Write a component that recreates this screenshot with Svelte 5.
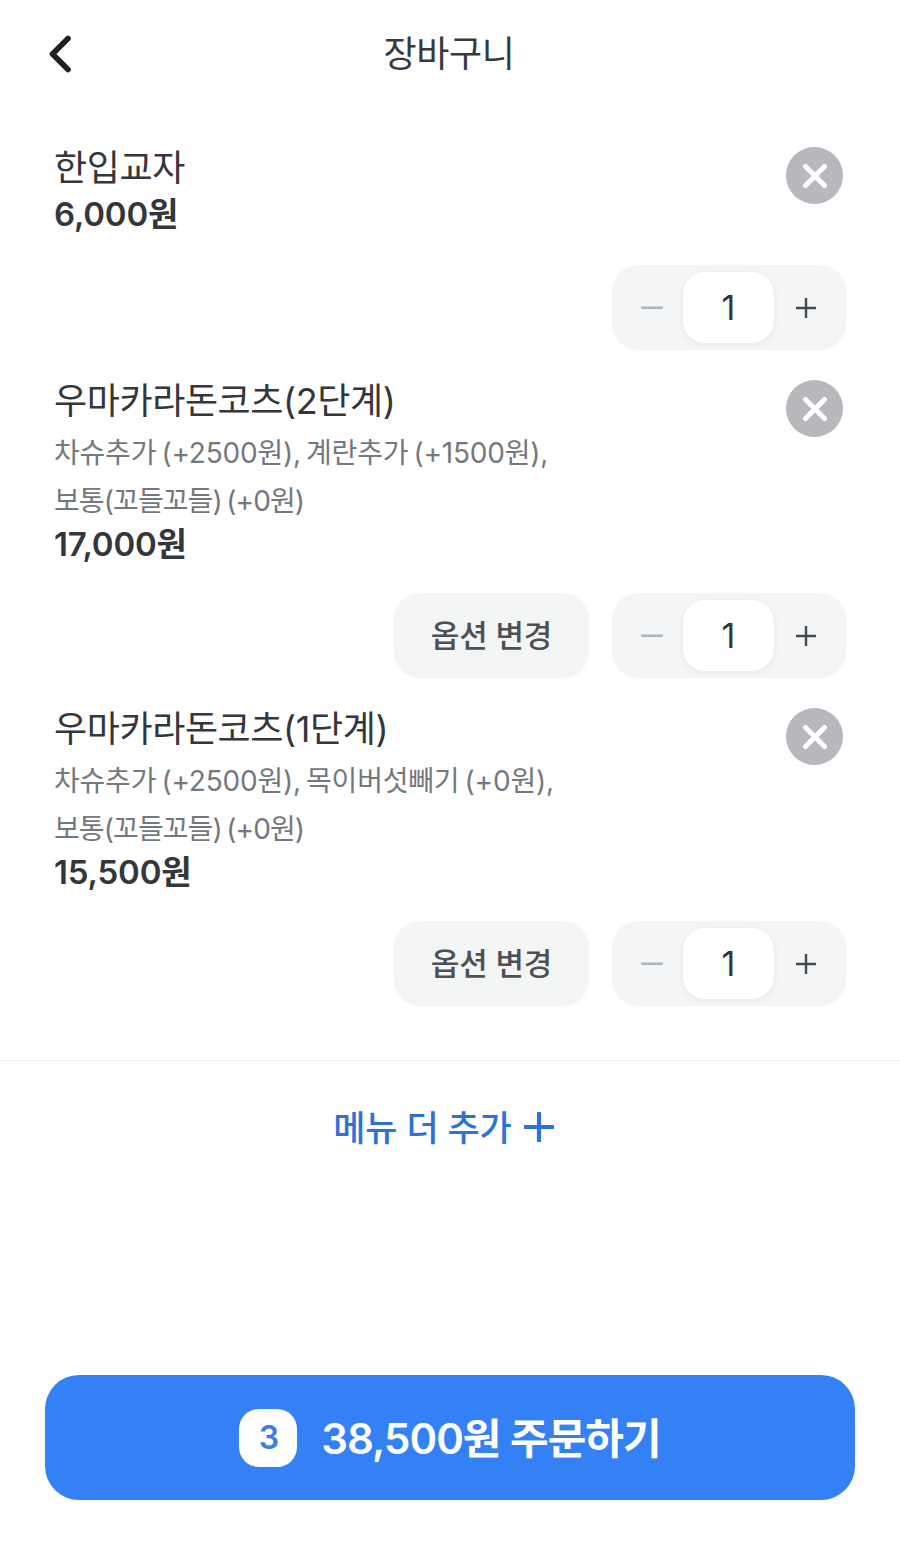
<script>
  const items = [
    { name: '한입교자', options: [], price: '6,000원', change: false },
    { name: '우마카라돈코츠(2단계)', options: ['차슈추가 (+2500원), 계란추가 (+1500원),', '보통(꼬들꼬들) (+0원)'], price: '17,000원', change: true },
    { name: '우마카라돈코츠(1단계)', options: ['차슈추가 (+2500원), 목이버섯빼기 (+0원),', '보통(꼬들꼬들) (+0원)'], price: '15,500원', change: true }
  ];
</script>

<div class="page">
  <header class="header">
    <button class="back" aria-label="뒤로">
      <svg width="26" height="38" viewBox="0 0 26 38" fill="none"><path d="M21 3.500 5.500 19 21 34.500" stroke="#1f2022" stroke-width="5.600" stroke-linecap="round" stroke-linejoin="round"/></svg>
    </button>
    <h1>장바구니</h1>
    <span></span>
  </header>

  <main class="list">
    {#each items as item}
      <section class="item">
        <div class="top">
          <div class="info">
            <div class="name">{item.name}</div>
            {#if item.options.length}
              <div class="options">
                {#each item.options as line}<div class="line">{line}</div>{/each}
              </div>
            {/if}
            <div class="price">{item.price}</div>
          </div>
          <button class="close" aria-label="삭제">
            <svg width="26" height="26" viewBox="0 0 26 26" fill="none"><path d="M3.500 3.500l19 19M22.500 3.500l-19 19" stroke="#fff" stroke-width="5" stroke-linecap="round"/></svg>
          </button>
        </div>
        <div class="actions">
          {#if item.change}<button class="change"><span>옵션 변경</span></button>{/if}
          <div class="stepper">
            <button class="step minus" aria-label="감소">
              <svg width="22" height="4" viewBox="0 0 22 4"><rect y="0.500" width="22" height="2.500" fill="#b1b5b9"/></svg>
            </button>
            <div class="qty">1</div>
            <button class="step plus" aria-label="증가">
              <svg width="20" height="20" viewBox="0 0 20 20"><path d="M0 10h20M10 0v20" stroke="#44484d" stroke-width="2.400"/></svg>
            </button>
          </div>
        </div>
      </section>
    {/each}
  </main>

  <div class="add">
    <span>메뉴 더 추가</span>
    <svg width="30" height="30" viewBox="0 0 30 30"><path d="M1.500 15h27M15 1.500v27" stroke="#2f72d6" stroke-width="4.200" stroke-linecap="round"/></svg>
  </div>

  <button class="order">
    <span class="badge">3</span>
    <span class="total">38,500원 주문하기</span>
  </button>
</div>

<style>
  :global(body) { margin: 0; background: #fff; }
  .page {
    width: 900px;
    min-height: 1546px;
    display: flex;
    flex-direction: column;
    box-sizing: border-box;
    padding-bottom: 46px;
    font-family: Inter, "Noto Sans CJK KR", sans-serif;
    color: #33363a;
    background: #fff;
  }
  button { border: 0; padding: 0; background: none; font: inherit; color: inherit; }
  .header {
    height: 108px;
    display: grid;
    grid-template-columns: 1fr auto 1fr;
    align-items: center;
    padding: 0 49px 0 47px;
    box-sizing: border-box;
  }
  .back { display: flex; justify-self: start; }
  h1 { margin: 0; font-size: 36px; font-weight: 400; letter-spacing: -0.4px; line-height: 46px; color: #36393d; }
  .list {
    display: flex;
    flex-direction: column;
    gap: 28px;
    padding: 37px 54px 54px;
    border-bottom: 1px solid #f0f1f3;
  }
  .top { display: flex; justify-content: space-between; align-items: flex-start; }
  .name { font-size: 36px; line-height: 46px; letter-spacing: -0.4px; color: #33363a; }
  .options { margin: 5px 0 -1px; font-size: 28px; line-height: 48px; word-spacing: -2.500px; color: #74787d; }
  .line:first-child { letter-spacing: -0.2px; }
  .line:last-child { letter-spacing: -0.9px; }
  .price { margin-top: 3px; font-size: 33px; line-height: 40px; font-weight: 600; letter-spacing: -0.2px; color: #33363a; }
  .options + .price { margin: 0 0 -2px; }
  .close {
    width: 57px;
    height: 57px;
    margin: 2px 3px 0 0;
    border-radius: 50%;
    background: #b6b8bb;
    display: flex;
    align-items: center;
    justify-content: center;
  }
  .actions { display: flex; justify-content: flex-end; gap: 23px; margin-top: 31px; }
  .change {
    width: 195px;
    height: 85px;
    box-sizing: border-box;
    padding-bottom: 4px;
    border-radius: 26px;
    background: #f4f5f5;
    font-size: 31px;
    font-weight: 500;
    letter-spacing: -0.2px;
    color: #4d5156;
  }
  .stepper {
    width: 234px;
    height: 85px;
    box-sizing: border-box;
    padding: 7px 0;
    border-radius: 26px;
    background: #f3f5f7;
    display: grid;
    grid-template-columns: 71px 91px 72px;
  }
  .step { display: flex; align-items: center; justify-content: center; }
  .minus { padding-left: 8px; }
  .plus { padding-right: 8px; }
  .qty {
    background: #fff;
    border-radius: 22px;
    box-shadow: 0 2px 6px rgba(60, 70, 80, 0.07);
    display: flex;
    align-items: center;
    justify-content: center;
    font-size: 34px;
    color: #33363a;
  }
  .add {
    display: flex;
    justify-content: center;
    align-items: center;
    gap: 12px;
    margin-top: 41px;
    height: 46px;
    padding-right: 13px;
    font-size: 35px;
    font-weight: 500;
    letter-spacing: -0.2px;
    color: #2f72d6;
  }
  .add svg { margin-top: 3px; }
  .order {
    align-self: center;
    margin-top: auto;
    width: 810px;
    height: 125px;
    border-radius: 34px;
    background: #3381f5;
    display: flex;
    align-items: center;
    justify-content: center;
    gap: 24px;
    font-size: 42px;
    font-weight: 600;
    letter-spacing: -1px;
    color: #fff;
  }
  .total { padding-bottom: 4px; }
  .badge {
    width: 58px;
    height: 58px;
    border-radius: 20px;
    background: #fff;
    color: #3a7fe0;
    font-size: 32px;
    font-weight: 600;
    display: flex;
    align-items: center;
    justify-content: center;
  }
</style>
